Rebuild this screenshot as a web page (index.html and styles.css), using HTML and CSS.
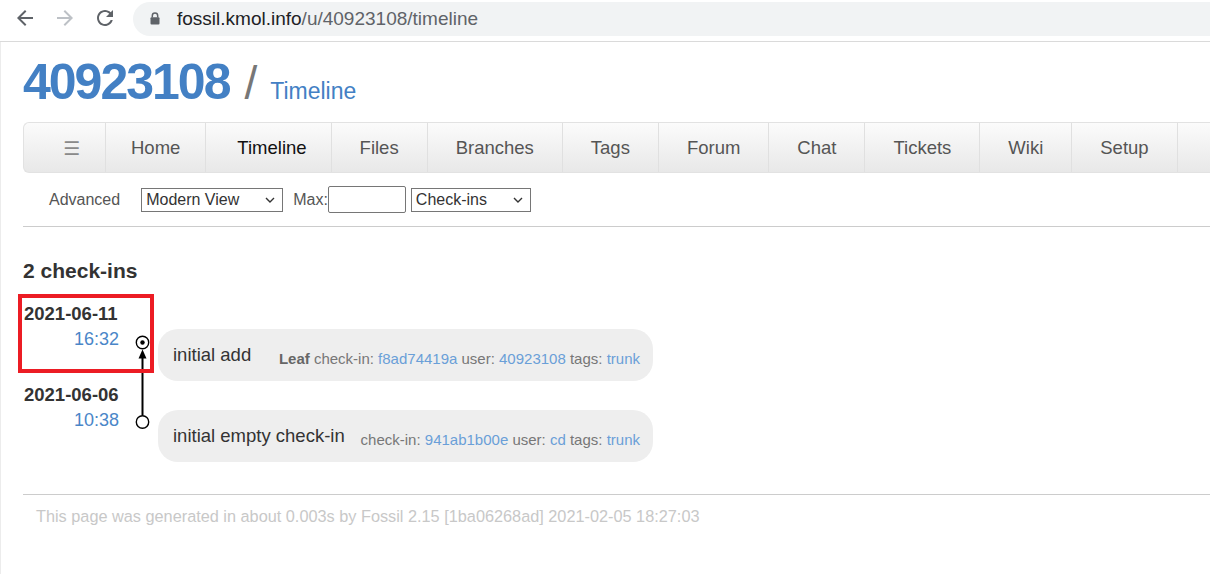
FILE: index.html
```html
<!DOCTYPE html>
<html lang="en">
<head>
<meta charset="utf-8">
<title>40923108: Timeline</title>
<link rel="stylesheet" href="styles.css">
</head>
<body>
<div class="chrome">
  <span class="chrome-btn">
    <svg viewBox="0 0 24 24"><path d="M20 11H7.83l5.59-5.59L12 4l-8 8 8 8 1.41-1.41L7.83 13H20v-2z"/></svg>
  </span>
  <span class="chrome-btn disabled">
    <svg viewBox="0 0 24 24"><path d="M12 4l-1.41 1.41L16.17 11H4v2h12.17l-5.58 5.59L12 20l8-8z"/></svg>
  </span>
  <span class="chrome-btn">
    <svg viewBox="0 0 24 24"><path d="M17.65 6.35C16.2 4.9 14.21 4 12 4c-4.42 0-7.99 3.58-7.99 8s3.57 8 7.99 8c3.73 0 6.84-2.55 7.73-6h-2.08c-.82 2.33-3.04 4-5.65 4-3.31 0-6-2.69-6-6s2.69-6 6-6c1.66 0 3.14.69 4.22 1.78L13 11h7V4l-2.35 2.35z"/></svg>
  </span>
  <div class="omnibox">
    <svg class="lock" viewBox="0 0 10 13"><path d="M2.3 5.5V3.8a2.7 2.7 0 0 1 5.4 0v1.7" fill="none" stroke="#5f6368" stroke-width="1.5"/><rect x="0.5" y="5.3" width="9" height="7.2" rx="1" fill="#5f6368"/></svg>
    <span class="host">fossil.kmol.info</span><span class="path">/u/40923108/timeline</span>
  </div>
</div>

<div class="page">
  <header class="header">
    <h1 class="title"><span class="project">40923108</span><span class="sep">/</span><span class="subtitle">Timeline</span></h1>
  </header>

  <nav class="mainmenu">
    <a class="toggle" href="#">&#9776;</a>
    <a class="home" href="#">Home</a>
    <a class="active" href="#">Timeline</a>
    <a href="#">Files</a>
    <a href="#">Branches</a>
    <a href="#">Tags</a>
    <a href="#">Forum</a>
    <a href="#">Chat</a>
    <a href="#">Tickets</a>
    <a href="#">Wiki</a>
    <a href="#">Setup</a>
  </nav>

  <div class="submenu">
    <a class="adv" href="#">Advanced</a>
    <span class="selectwrap sel-view">
      <select><option>Modern View</option></select>
      <svg class="chev" viewBox="0 0 10 6"><path d="M1 1l4 4 4-4" fill="none" stroke="#333" stroke-width="1.4"/></svg>
    </span>
    <label class="maxlabel">Max:</label><input class="maxinput" type="text">
    <span class="selectwrap sel-type">
      <select><option>Check-ins</option></select>
      <svg class="chev" viewBox="0 0 10 6"><path d="M1 1l4 4 4-4" fill="none" stroke="#333" stroke-width="1.4"/></svg>
    </span>
  </div>

  <div class="content">
    <h2 class="count">2 check-ins</h2>
    <div class="timeline">
      <div class="tl-date">2021-06-11</div>
      <div class="tl-entry">
        <a class="tl-time" href="#">16:32</a>
        <div class="tl-graph"></div>
        <div class="tl-bubble">
          <span class="tl-comment">initial add</span>
          <span class="tl-meta"><b>Leaf</b> check-in: <a href="#">f8ad74419a</a> user: <a href="#">40923108</a> tags: <a href="#">trunk</a></span>
        </div>
      </div>
      <div class="tl-date second">2021-06-06</div>
      <div class="tl-entry">
        <a class="tl-time" href="#">10:38</a>
        <div class="tl-graph"></div>
        <div class="tl-bubble">
          <span class="tl-comment">initial empty check-in</span>
          <span class="tl-meta">check-in: <a href="#">941ab1b00e</a> user: <a href="#">cd</a> tags: <a href="#">trunk</a></span>
        </div>
      </div>

      <svg class="tl-rails" viewBox="0 0 38 159" width="38" height="159">
        <line x1="22.5" y1="54" x2="22.5" y2="112.5" stroke="#000" stroke-width="2"/>
        <polygon points="22.5,46.5 18.5,55.5 26.5,55.5" fill="#000"/>
        <circle cx="22.5" cy="39.5" r="6.2" fill="#fff" stroke="#000" stroke-width="1.4"/>
        <circle cx="22.5" cy="39.5" r="2.2" fill="#000"/>
        <circle cx="22.5" cy="119" r="6.2" fill="#fff" stroke="#000" stroke-width="1.4"/>
      </svg>
      <div class="highlight"></div>
    </div>
  </div>

  <div class="footer">This page was generated in about 0.003s by Fossil 2.15 [1ba06268ad] 2021-02-05 18:27:03</div>
</div>
</body>
</html>
```

FILE: styles.css
```css
* { box-sizing: border-box; }

html, body {
  margin: 0;
  padding: 0;
  background: #fff;
}

body {
  width: 1210px;
  height: 574px;
  overflow: hidden;
  font-family: "Liberation Sans", Arial, sans-serif;
  color: #333;
}

/* ---------- browser toolbar ---------- */
.chrome {
  height: 42px;
  border-bottom: 1px solid #dadada;
  display: flex;
  align-items: flex-start;
  padding-left: 5px;
  overflow: hidden;
}

.chrome-btn {
  flex: none;
  width: 40px;
  height: 36px;
  display: flex;
  align-items: center;
  justify-content: center;
}

.chrome-btn svg {
  width: 24px;
  height: 24px;
  fill: #5f6368;
}

.chrome-btn.disabled svg { fill: #bdc1c6; }

.omnibox {
  flex: none;
  width: 1200px;
  margin-left: 8px;
  margin-top: 2px;
  height: 34px;
  border-radius: 17px;
  background: #f1f3f4;
  display: flex;
  align-items: center;
  padding-left: 17px;
  font-size: 19px;
  white-space: nowrap;
}

.omnibox .lock {
  width: 10px;
  height: 13px;
  margin-right: 17px;
  margin-top: -1px;
}

.omnibox .host { color: #202124; }
.omnibox .path { color: #5f6368; }

/* ---------- page ---------- */
.page {
  border-left: 1px solid #ececec;
  padding-left: 22px;
  height: 532px;
  overflow: hidden;
}

.header {
  padding-top: 11px;
}

.title {
  margin: 0;
  height: 58px;
  display: flex;
  align-items: baseline;
  line-height: 58px;
  white-space: nowrap;
}

.project {
  font-size: 50px;
  font-weight: bold;
  letter-spacing: -2px;
  color: #4380c4;
}

.sep {
  font-size: 46px;
  font-weight: normal;
  color: #777;
  margin: 0 13px 0 15px;
}

.subtitle {
  font-size: 23px;
  font-weight: normal;
  color: #4380c4;
}

/* ---------- main menu ---------- */
.mainmenu {
  margin-top: 11px;
  height: 51px;
  display: flex;
  background: linear-gradient(#fbfbfb, #e8e8e8);
  border: 1px solid #e2e2e2;
  border-right: none;
  border-radius: 6px 0 0 6px;
  overflow: hidden;
  white-space: nowrap;
}

.mainmenu a {
  flex: none;
  display: flex;
  align-items: center;
  padding: 0 28px;
  font-size: 18.5px;
  color: #555;
  text-decoration: none;
  border-right: 1px solid #e0e0e0;
}

.mainmenu a.toggle {
  width: 82px;
  padding: 0 0 0 39px;
  font-family: "DejaVu Sans", sans-serif;
  font-size: 19px;
  color: #8a8a8a;
}

.mainmenu a.home { padding: 0 25px; }

.mainmenu a.active { color: #111; padding: 0 24px 0 31px; }

/* ---------- submenu ---------- */
.submenu {
  height: 54px;
  border-bottom: 1px solid #ccc;
  display: flex;
  align-items: center;
  padding-left: 26px;
  font-size: 16px;
  color: #555;
}

.submenu .adv {
  color: #555;
  text-decoration: none;
  margin-right: 21px;
}

.selectwrap {
  position: relative;
  display: inline-block;
  height: 24px;
}

.selectwrap select {
  -webkit-appearance: none;
  appearance: none;
  height: 24px;
  border: 1px solid #767676;
  border-radius: 0;
  background: #fff;
  padding: 0 0 0 4px;
  font-family: "Liberation Sans", Arial, sans-serif;
  font-size: 16px;
  color: #333;
}

.sel-view select { width: 142px; }
.sel-type select { width: 120px; }
.sel-type { margin-left: 5px; }

.chev {
  position: absolute;
  right: 8px;
  top: 9px;
  width: 10px;
  height: 6px;
  pointer-events: none;
}

.maxlabel {
  margin-left: 10px;
  color: #555;
}

.maxinput {
  width: 78px;
  height: 27px;
  border: 1px solid #767676;
  border-radius: 2px;
  padding: 0 4px;
  font-size: 16px;
}

/* ---------- content ---------- */
.count {
  margin: 32px 0 20px;
  font-size: 21px;
  line-height: 24px;
  font-weight: bold;
  color: #333;
}

.timeline {
  position: relative;
}

.tl-date {
  height: 21px;
  line-height: 21px;
  font-size: 18.5px;
  font-weight: bold;
  color: #333;
  margin-bottom: 5px;
  padding-left: 1px;
}

.tl-date.second { margin-top: 3px; }

.tl-entry {
  display: flex;
  align-items: flex-start;
}

.tl-time {
  flex: none;
  width: 97px;
  padding-right: 1px;
  text-align: right;
  font-size: 18px;
  line-height: 21px;
  color: #4a86c8;
  text-decoration: none;
}

.tl-graph {
  flex: none;
  width: 38px;
}

.tl-bubble {
  flex: none;
  width: 495px;
  height: 52px;
  background: #eee;
  border-radius: 20px;
  display: flex;
  justify-content: space-between;
  align-items: flex-start;
  padding: 0 13px 0 15px;
  white-space: nowrap;
}

.tl-comment {
  font-size: 18.5px;
  line-height: 21px;
  margin-top: 14.5px;
  color: #333;
}

.tl-meta {
  font-size: 15px;
  line-height: 18px;
  margin-top: 21px;
  color: #777;
}

.tl-meta b { color: #666; }

.tl-meta a {
  color: #6a9fd8;
  text-decoration: none;
}

.tl-rails {
  position: absolute;
  left: 97px;
  top: 0;
}

.highlight {
  position: absolute;
  left: -5px;
  top: -9px;
  width: 136px;
  height: 79px;
  border: 4px solid #ec1c24;
}

/* ---------- footer ---------- */
.footer {
  margin-top: 32px;
  border-top: 1px solid #ccc;
  padding: 12px 0 0 13px;
  font-size: 16.3px;
  line-height: 18px;
  color: #c8c8c8;
  white-space: nowrap;
}
```
